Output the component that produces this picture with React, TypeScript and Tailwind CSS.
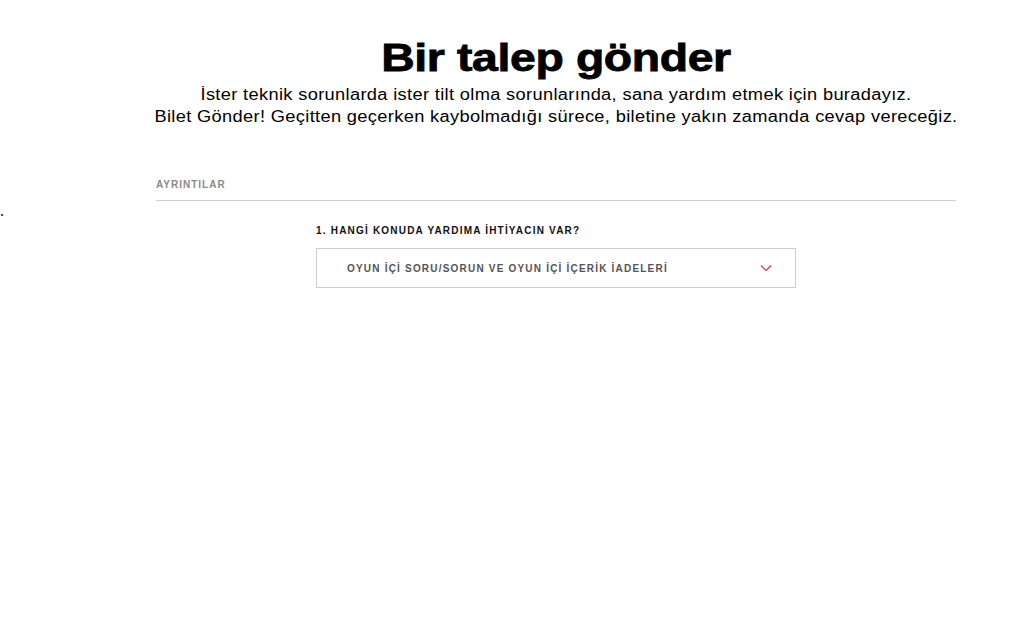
import React from "react";

export default function App() {
  return (
    <div className="relative min-h-[622px] w-full bg-white font-['Liberation_Sans',Arial,sans-serif] text-black">
      {/* stray focus dot at the left edge */}
      <span className="absolute left-[1px] top-[214px] h-[2px] w-[2px] bg-[#3b3bd6]" />

      <div className="ml-[156px] w-[800px] pt-[34px]">
        <h1 className="scale-x-[1.22] text-center text-[38px] font-bold leading-[48px] tracking-[-0.3px] [-webkit-text-stroke:0.8px_black]">
          Bir talep gönder
        </h1>
        <p className="mt-[2px] scale-x-[1.14] text-center text-[16px] leading-[22px] tracking-[0.3px]">
          İster teknik sorunlarda ister tilt olma sorunlarında, sana yardım etmek için buradayız.
          <br />
          Bilet Gönder! Geçitten geçerken kaybolmadığı sürece, biletine yakın zamanda cevap vereceğiz.
        </p>

        <div className="mt-[43px] border-b border-[#cfcfcf] pb-[5px]">
          <span className="text-[10px] font-bold uppercase tracking-[1px] text-[#8a8a8a]">
            Ayrıntılar
          </span>
        </div>

        <div className="mx-auto mt-[24px] w-[480px]">
          <label className="block text-[10px] font-bold leading-[12px] tracking-[1.2px] text-[#111]">
            1. HANGİ KONUDA YARDIMA İHTİYACIN VAR?
          </label>
          <button className="mt-[11px] flex h-[40px] w-full items-center justify-between border border-[#cfcfcf] bg-white pl-[30px] pr-[23px] text-left">
            <span className="text-[10px] font-bold tracking-[1.2px] text-[#555]">
              OYUN İÇİ SORU/SORUN VE OYUN İÇİ İÇERİK İADELERİ
            </span>
            <svg width="12" height="8" viewBox="0 0 12 8" fill="none">
              <path d="M1 1.5L6 6.5L11 1.5" stroke="#d13639" strokeWidth="1.2" />
            </svg>
          </button>
        </div>
      </div>
    </div>
  );
}
